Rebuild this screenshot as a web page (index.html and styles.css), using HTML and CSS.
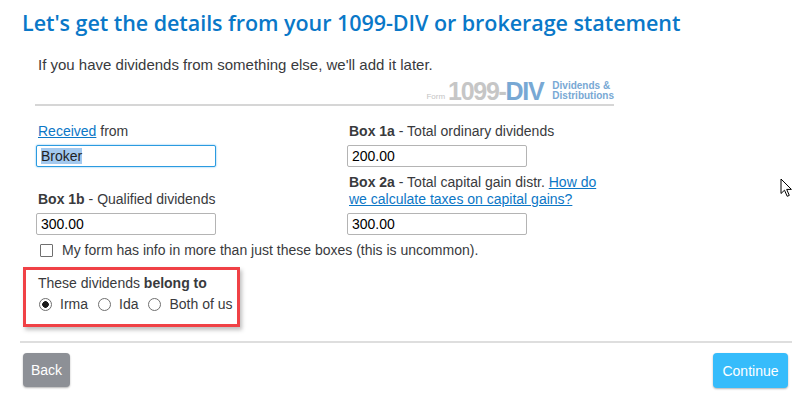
FILE: index.html
```html
<!DOCTYPE html>
<html lang="en">
<head>
<meta charset="utf-8">
<title>1099-DIV details</title>
<link rel="stylesheet" href="styles.css">
</head>
<body>
<div class="page">
  <h1 class="title">Let's get the details from your 1099-DIV or brokerage statement</h1>
  <section class="form">
    <p class="intro">If you have dividends from something else, we'll add it later.</p>
    <div class="form-head">
      <span class="logo-form">Form</span>
      <span class="logo-num">1099-<span class="logo-div">DIV</span></span>
      <span class="logo-desc">Dividends &amp;<br>Distributions</span>
    </div>
    <div class="grid">
      <div class="field">
        <label class="lbl" for="payer"><a href="#" class="link">Received</a> from</label>
        <input id="payer" class="inp inp-focus" type="text" value="Broker">
      </div>
      <div class="field">
        <label class="lbl" for="b1a"><b>Box 1a</b> - Total ordinary dividends</label>
        <input id="b1a" class="inp" type="text" value="200.00">
      </div>
      <div class="field field-end">
        <label class="lbl" for="b1b"><b>Box 1b</b> - Qualified dividends</label>
        <input id="b1b" class="inp" type="text" value="300.00">
      </div>
      <div class="field field-end">
        <label class="lbl lbl-wrap" for="b2a"><b>Box 2a</b> - Total capital gain distr. <a href="#" class="link">How do we calculate taxes on capital gains?</a></label>
        <input id="b2a" class="inp" type="text" value="300.00">
      </div>
    </div>
    <label class="check"><input type="checkbox" class="cb"> My form has info in more than just these boxes (this is uncommon).</label>
    <div class="owner">
      <div class="owner-q">These dividends <b>belong to</b></div>
      <div class="radios">
        <label class="radio"><input type="radio" name="own" checked> Irma</label>
        <label class="radio"><input type="radio" name="own"> Ida</label>
        <label class="radio"><input type="radio" name="own"> Both of us</label>
      </div>
    </div>
  </section>
  <footer class="actions">
    <button class="btn btn-back" type="button">Back</button>
    <button class="btn btn-next" type="button">Continue</button>
  </footer>
  <svg class="cursor" width="13" height="20" viewBox="0 0 13 20"><path d="M1 1 L1 15.5 L4.5 12.2 L7.2 18.3 L9.3 17.4 L6.7 11.4 L11.4 11.4 Z" fill="#fff" stroke="#000" stroke-width="1" stroke-linejoin="round"/></svg>
</div>
<script src="app.js"></script>
</body>
</html>
```

FILE: styles.css
```css
* { box-sizing: border-box; }
html, body { margin: 0; background: #fff; }
body {
  font-family: "Liberation Sans", Arial, sans-serif;
  font-size: 14px;
  color: #393a3d;
}
.page { position: relative; width: 807px; height: 406px; overflow: hidden; }
.title {
  margin: 0;
  padding: 9px 0 0 22px;
  font-family: "Open Sans", sans-serif;
  font-weight: 600;
  font-size: 21.5px;
  line-height: 28px;
  color: #0a78c8;
  letter-spacing: -0.05px;
}
.form { margin-left: 35px; width: 579px; }
.intro { margin: 19px 0 0 3px; font-size: 15px; line-height: 17px; }
.form-head {
  display: flex;
  justify-content: flex-end;
  align-items: flex-end;
  margin-top: 7px;
  height: 26px;
  padding-bottom: 2px;
  border-bottom: 2px solid #d6d6d6;
}
.logo-form { font-size: 8px; color: #c4c4c4; margin-right: 3px; line-height: 10px; }
.logo-num {
  font-weight: 700;
  font-size: 25px;
  line-height: 22px;
  letter-spacing: -1.3px;
  color: #c6c6c6;
  margin-right: 9px;
}
.logo-div { color: #78a8d4; }
.logo-desc {
  font-size: 10px;
  line-height: 10px;
  font-weight: 700;
  color: #78a8d4;
  padding-bottom: 1px;
}
.grid {
  display: grid;
  grid-template-columns: 311px 268px;
  row-gap: 7px;
  margin-top: 17px;
}
.field { display: flex; flex-direction: column; align-items: flex-start; padding-left: 1px; }
.field-end { justify-content: flex-end; }
.lbl { display: block; line-height: 17px; margin: 0 0 5px 2px; }
.lbl-wrap { margin-bottom: 5px; }
.lbl b { color: #393a3d; }
.link { color: #0c77c6; text-decoration: underline; }
.inp {
  width: 180px;
  height: 22px;
  border: 1px solid #b4b4b4;
  border-radius: 2px;
  padding: 0 4px;
  font-family: "Liberation Sans", Arial, sans-serif;
  font-size: 14px;
  color: #000;
  outline: none;
}
.inp-focus { border-color: #2b9be0; box-shadow: 0 0 2px #62b7ee; }
.inp::selection { background: #a3c9ef; color: #1f1f1f; }
.check {
  display: flex;
  align-items: center;
  margin: 7px 0 0 5px;
  line-height: 17px;
}
.cb {
  appearance: none;
  -webkit-appearance: none;
  width: 13px;
  height: 13px;
  margin: 0 9px 0 0;
  border: 1px solid #6f6f6f;
  border-radius: 1px;
  background: #fff;
}
.owner {
  margin: 8px 0 0 -12px;
  width: 217px;
  height: 60px;
  border: 3px solid #f04146;
  box-shadow: 2px 3px 4px rgba(0,0,0,0.25);
  padding: 5px 0 0 12px;
}
.owner-q { line-height: 17px; }
.radios { display: flex; margin-top: 4px; line-height: 17px; white-space: nowrap; }
.radio { display: flex; align-items: center; margin-right: 9px; flex: none; }
.radio input {
  appearance: none;
  -webkit-appearance: none;
  width: 13px;
  height: 13px;
  margin: 0 8px 0 1px;
  border: 1px solid #6f6f6f;
  border-radius: 50%;
  background: #fff;
}
.radio input:checked { background: radial-gradient(circle, #1a1a1a 0 3px, #fff 3.6px); }
.actions {
  margin: 14px 15px 0 20px;
  border-top: 2px solid #dedede;
  padding: 10px 4px 0 3px;
  display: flex;
  justify-content: space-between;
  align-items: flex-start;
}
.btn {
  border: none;
  border-radius: 4px;
  color: #fff;
  font-family: "Liberation Sans", Arial, sans-serif;
  font-size: 14px;
  box-shadow: 0 1px 2px rgba(0,0,0,0.3);
}
.btn-back { width: 47px; height: 34px; background: #8d9096; }
.btn-next { width: 75px; height: 35px; background: #36bcfb; }
.cursor { position: absolute; left: 780px; top: 178px; }
```

FILE: app.js
```js
var p = document.getElementById('payer');
p.focus();
p.select();
```
